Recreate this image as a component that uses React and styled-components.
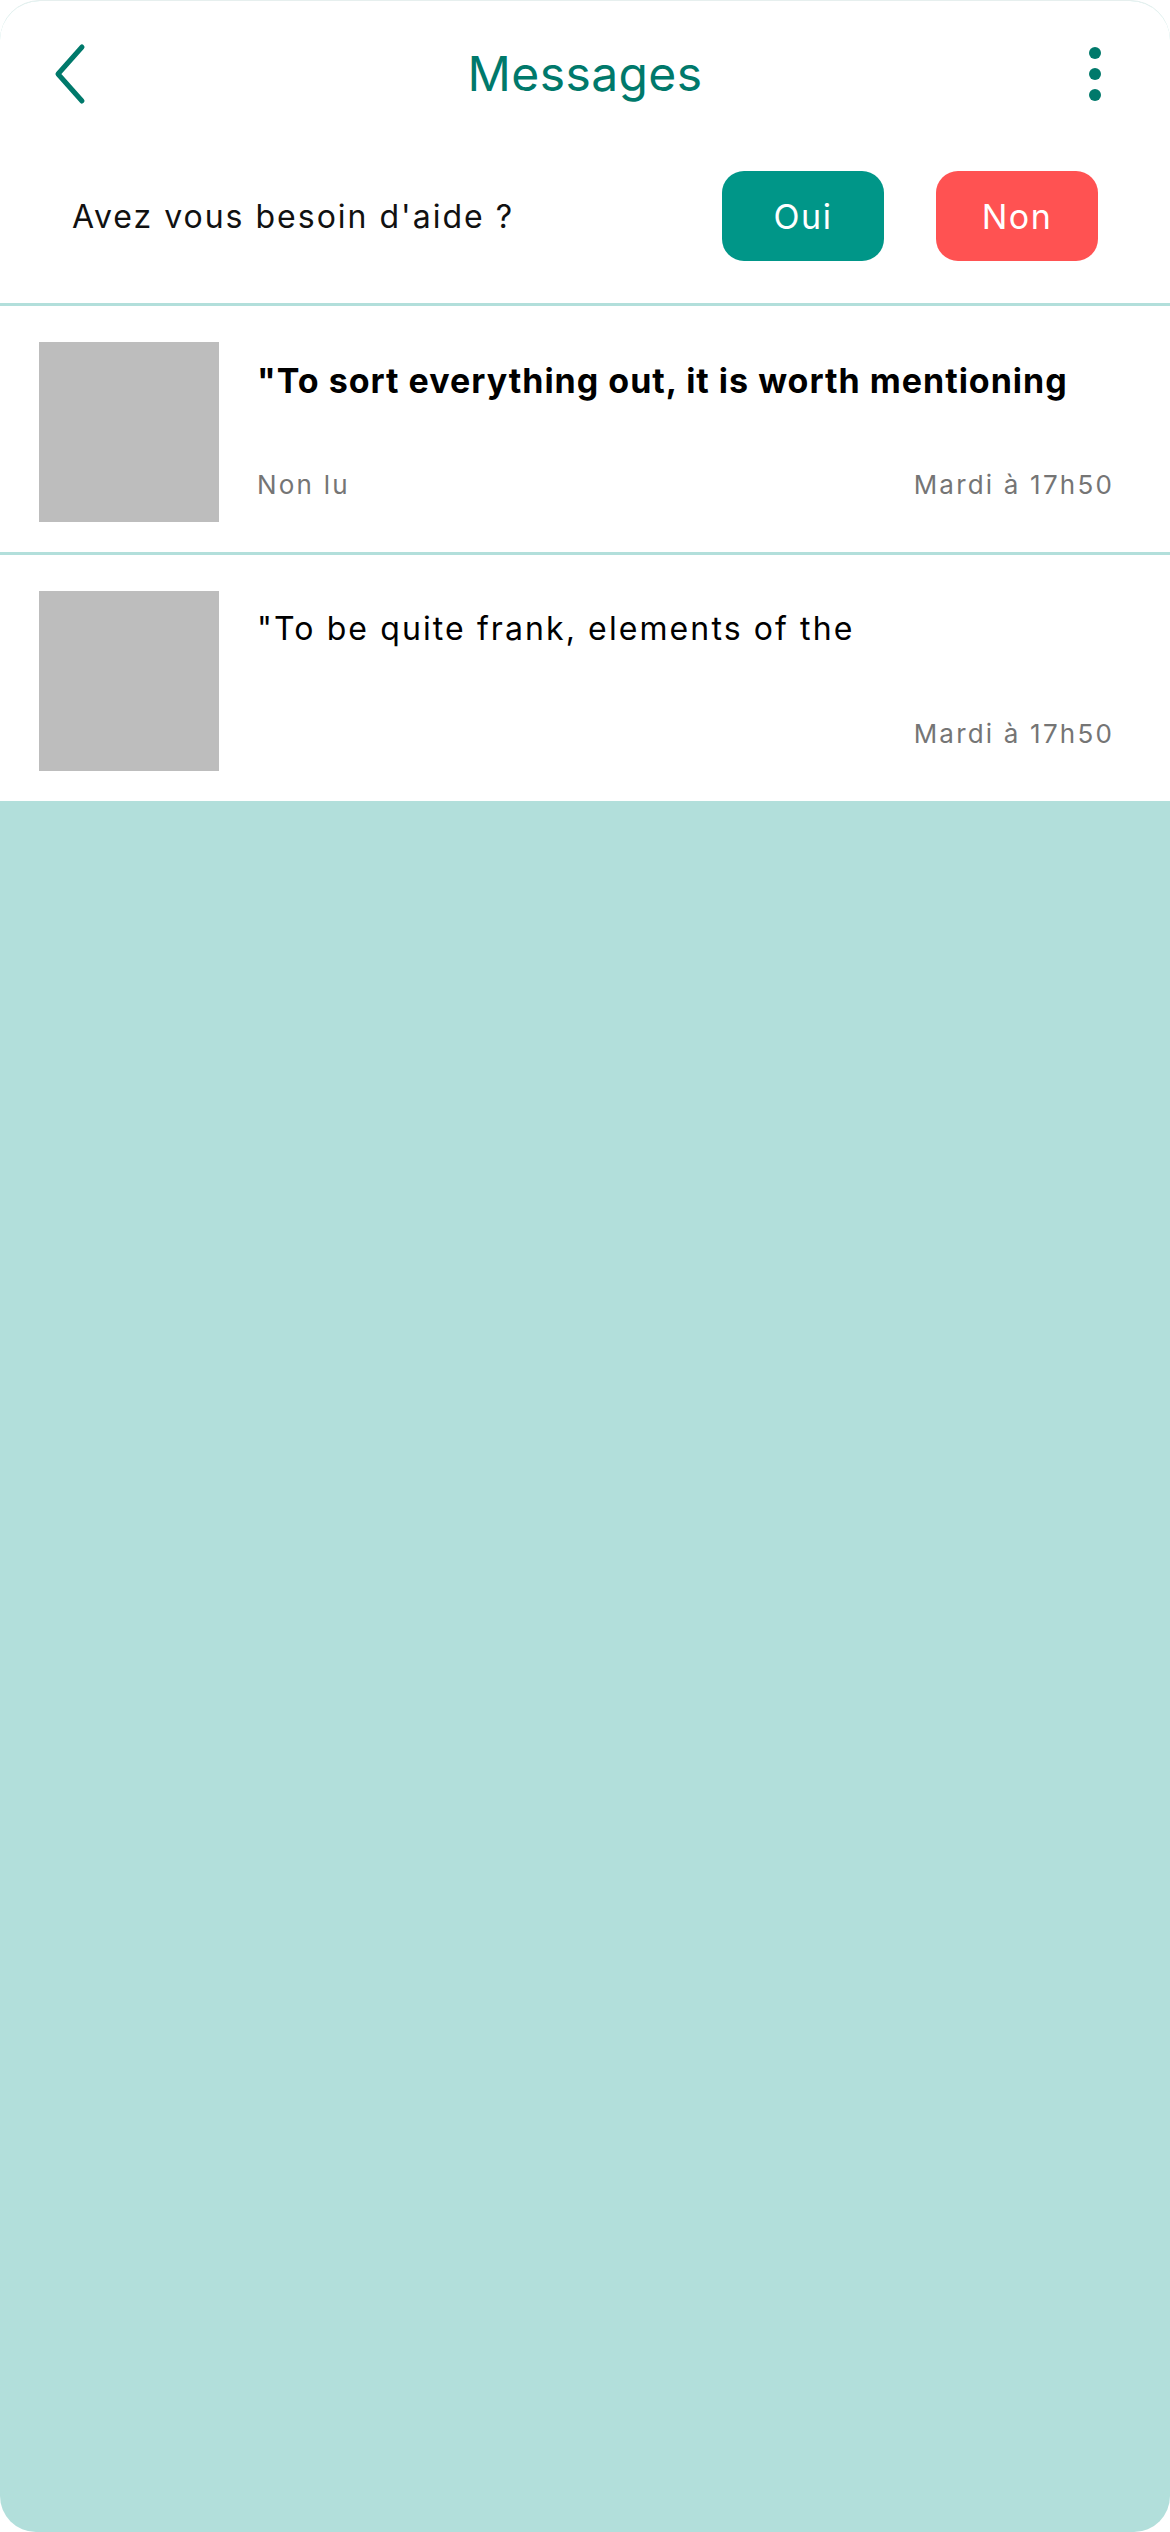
import React from 'react';
import styled, { createGlobalStyle } from 'styled-components';

const GlobalStyle = createGlobalStyle`
    html, body {
        margin: 0;
        padding: 0;
        background: #ffffff;
    }
    body {
        font-family: Inter, "Noto Sans", sans-serif;
    }
`;

const messages = [
    {
        id: 1,
        text: '"To sort everything out, it is worth mentioning',
        unread: true,
        date: 'Mardi à 17h50',
    },
    {
        id: 2,
        text: '"To be quite frank, elements of the',
        unread: false,
        date: 'Mardi à 17h50',
    },
];

const BackIcon = () => (
    <svg width="40" height="64" viewBox="0 0 40 64" fill="none">
        <polyline
            points="30,5 6,32 30,59"
            stroke="#00796b"
            strokeWidth="5"
            strokeLinecap="round"
            strokeLinejoin="round"
        />
    </svg>
);

const MenuIcon = () => (
    <svg width="16" height="60" viewBox="0 0 16 60">
        <circle cx="8" cy="9" r="6" fill="#00796b" />
        <circle cx="8" cy="30" r="6" fill="#00796b" />
        <circle cx="8" cy="51" r="6" fill="#00796b" />
    </svg>
);

export default function App() {
    return (
        <>
            <GlobalStyle />
            <Screen>
                <Top>
                    <Header>
                        <IconButton aria-label="Retour">
                            <BackIcon />
                        </IconButton>
                        <Title>Messages</Title>
                        <IconButton aria-label="Menu" right>
                            <MenuIcon />
                        </IconButton>
                    </Header>
                    <HelpRow>
                        <HelpText>Avez vous besoin d'aide ?</HelpText>
                        <Buttons>
                            <Choice color="#009688">Oui</Choice>
                            <Choice color="#ff5252">Non</Choice>
                        </Buttons>
                    </HelpRow>
                </Top>
                <List>
                    {messages.map(m => (
                        <Item key={m.id}>
                            <Thumb />
                            <Body>
                                <Preview unread={m.unread}>{m.text}</Preview>
                                <Meta>
                                    <span>{m.unread ? 'Non lu' : ''}</span>
                                    <span>{m.date}</span>
                                </Meta>
                            </Body>
                        </Item>
                    ))}
                </List>
            </Screen>
        </>
    );
}

const Screen = styled.div`
    min-height: 2532px;
    box-sizing: border-box;
    background-color: #b2dfdb;
    border-radius: 40px 40px 36px 36px;
    border-top: 1px solid #e6efee;
    overflow: hidden;
`;

const Top = styled.div`
    background-color: #ffffff;
    border-bottom: 3px solid #b2dfdb;
`;

const Header = styled.header`
    height: 145px;
    display: grid;
    grid-template-columns: 1fr auto 1fr;
    align-items: center;
    padding: 0 52px;
`;

const IconButton = styled.button`
    border: none;
    background: none;
    padding: 0;
    display: flex;
    justify-self: ${props => props.right ? 'end' : 'start'};
    margin-right: ${props => props.right ? '15px' : '0'};
    cursor: pointer;
`;

const Title = styled.h1`
    margin: 0;
    font-size: 48px;
    font-weight: 400;
    color: #00796b;
    letter-spacing: 0.4px;
`;

const HelpRow = styled.div`
    display: flex;
    align-items: center;
    justify-content: space-between;
    padding: 25px 72px 42px 72px;
`;

const HelpText = styled.p`
    margin: 0;
    font-size: 32px;
    color: #111111;
    letter-spacing: 2px;
`;

const Buttons = styled.div`
    display: flex;
    gap: 52px;
`;

const Choice = styled.button`
    width: 162px;
    height: 90px;
    border: none;
    border-radius: 22px;
    background-color: ${props => props.color};
    color: #ffffff;
    font-family: Inter, sans-serif;
    font-size: 34px;
    letter-spacing: 1.5px;
    cursor: pointer;
`;

const List = styled.div`
    background-color: #ffffff;
`;

const Item = styled.div`
    display: flex;
    gap: 38px;
    padding: 36px 56px 30px 39px;
    border-bottom: 3px solid #b2dfdb;
    &:last-child {
        border-bottom: none;
    }
`;

const Thumb = styled.div`
    flex: none;
    width: 180px;
    height: 180px;
    background-color: #bdbdbd;
`;

const Body = styled.div`
    flex: 1;
    display: flex;
    flex-direction: column;
    justify-content: space-between;
    padding: 18px 0 22px;
    min-width: 0;
`;

const Preview = styled.p`
    margin: 0;
    font-size: ${props => props.unread ? '34px' : '32px'};
    font-weight: ${props => props.unread ? 700 : 400};
    color: #000000;
    white-space: nowrap;
    overflow: hidden;
    letter-spacing: ${props => props.unread ? '1px' : '2.1px'};
`;

const Meta = styled.div`
    display: flex;
    justify-content: space-between;
    font-size: 26px;
    letter-spacing: 2.2px;
    color: #757575;
`;
